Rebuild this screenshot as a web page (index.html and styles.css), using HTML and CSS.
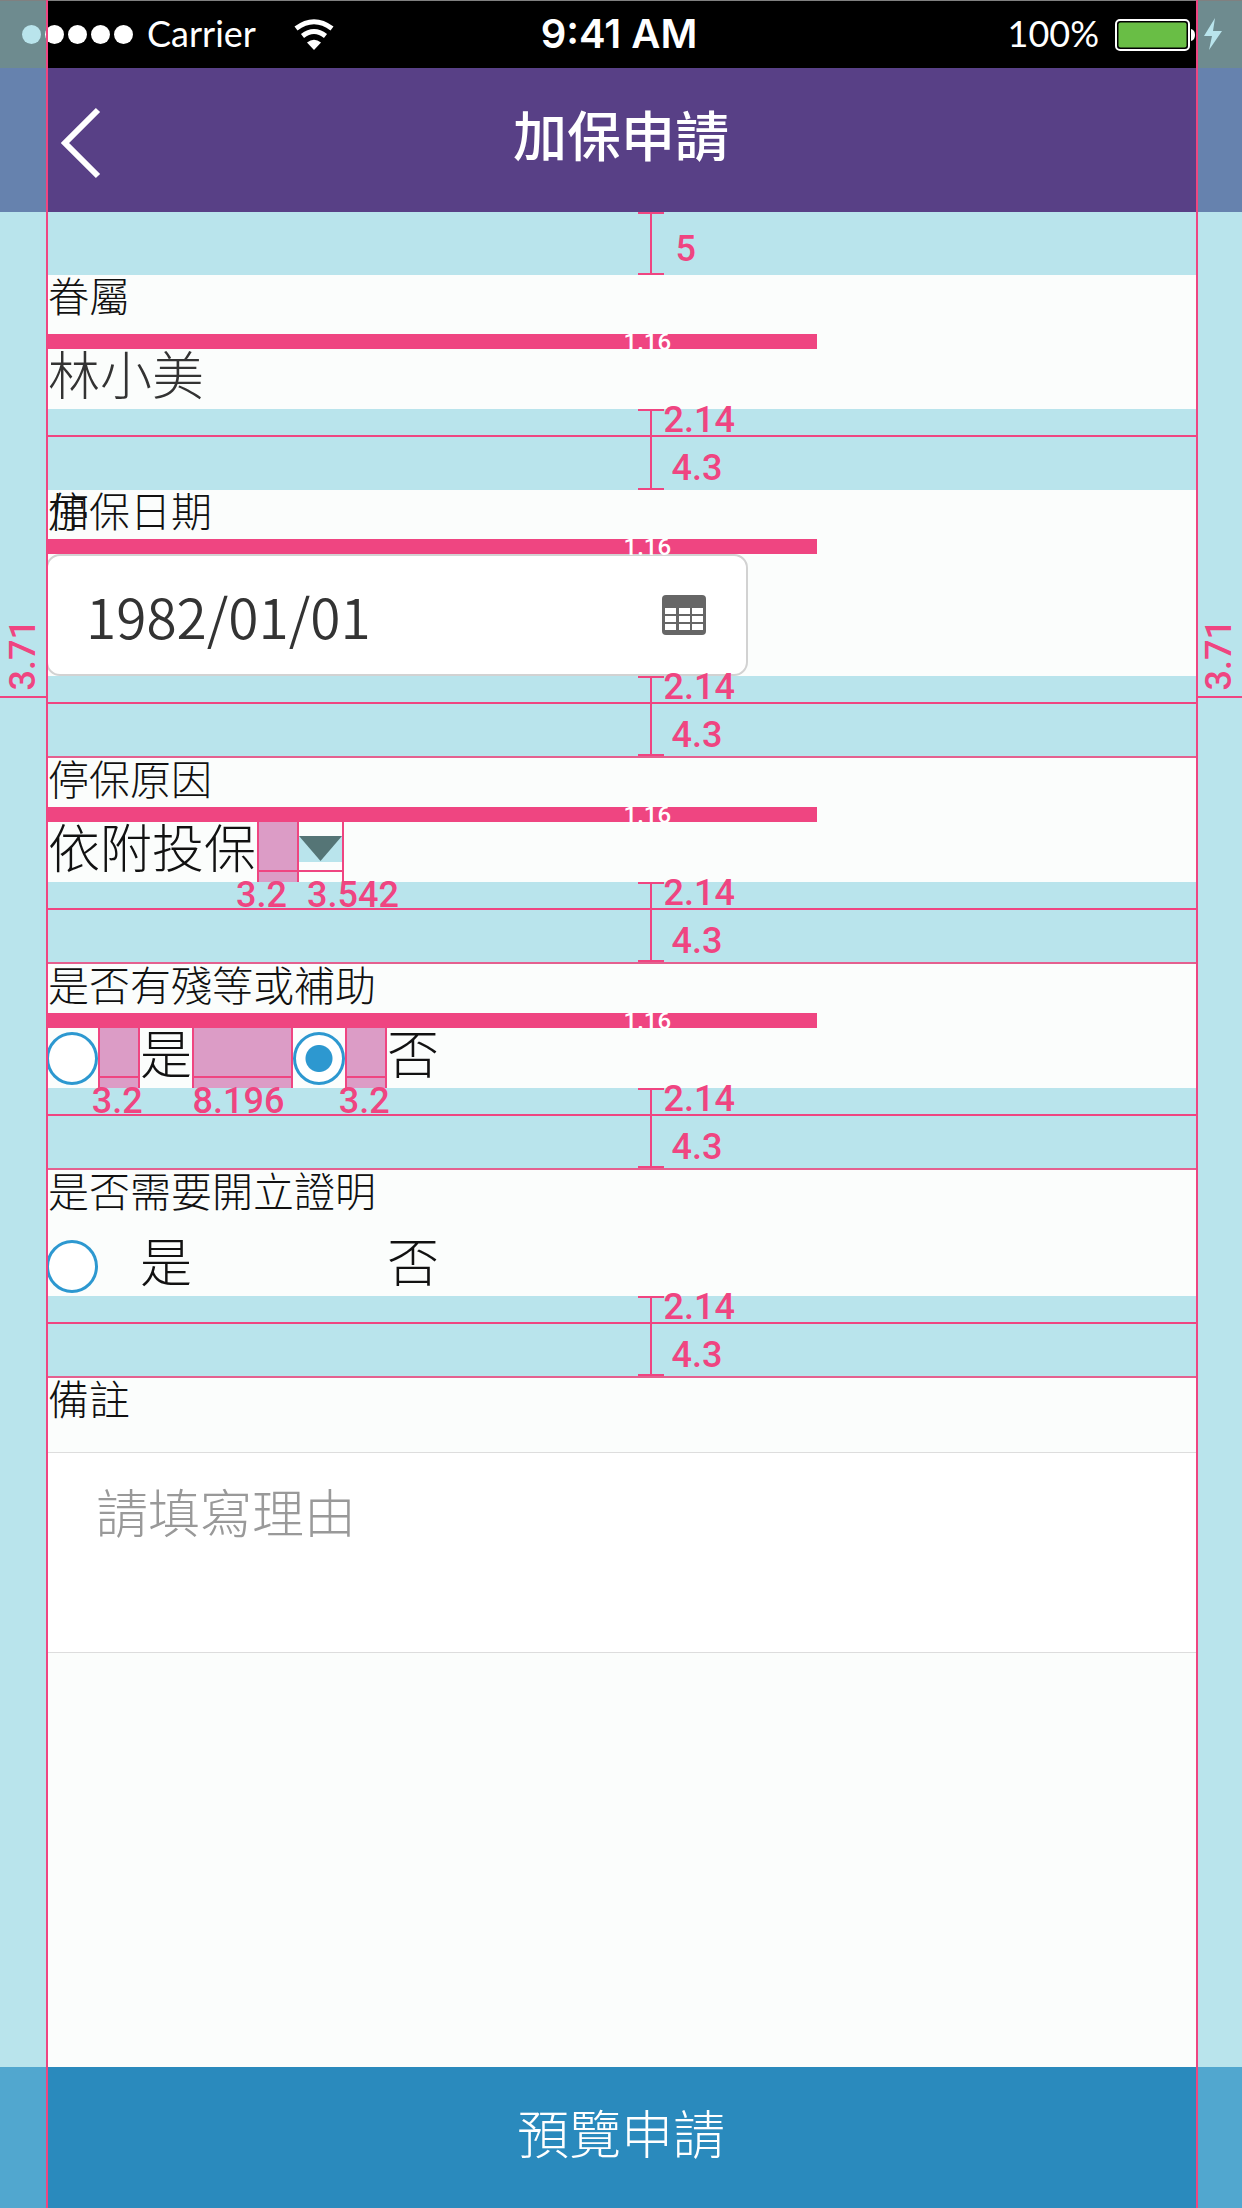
FILE: index.html
```html
<!DOCTYPE html>
<html lang="zh-Hant">
<head>
<meta charset="utf-8">
<meta name="viewport" content="width=device-width, initial-scale=1">
<title>加保申請</title>
<link rel="stylesheet" href="styles.css">
</head>
<body>
<div class="screen">
  <div class="status">
    <div class="status-left">
      <span class="dots"><i class="dot dot-tinted"></i><i class="dot"></i><i class="dot"></i><i class="dot"></i><i class="dot"></i></span>
      <span class="carrier">Carrier</span>
      <svg class="wifi" width="40" height="31" viewBox="0 0 40 31" fill="none" stroke="#fff" stroke-width="5">
        <path d="M2 9.500Q20 -4 38 9.500"/>
        <path d="M8.500 17Q20 8 31.500 17"/>
        <path d="M13 23.500Q20 18 27 23.500L20 31Z" fill="#fff" stroke="none"/>
      </svg>
    </div>
    <span class="clock">9:41 AM</span>
    <div class="status-right">
      <span class="percent">100%</span>
      <svg width="107" height="34" viewBox="0 0 107 34">
        <rect x="1" y="2" width="73" height="30" rx="4" fill="#000" stroke="#fff" stroke-width="2"/>
        <rect x="3.500" y="4.500" width="68" height="25" rx="2" fill="#69be45"/>
        <path d="M76 11q4 1 4 6t-4 6z" fill="#fff"/>
        <path d="M100 0L89 18h8l-3 14L107 13h-9z" fill="#b9e4ec"/>
      </svg>
    </div>
  </div>

  <header class="header">
    <button class="back" type="button" aria-label="返回">
      <svg width="40" height="72" viewBox="0 0 40 72" fill="none" stroke="#fff" stroke-width="6"><path d="M37 3L4 36L37 69"/></svg>
    </button>
    <h1 class="title">加保申請</h1>
  </header>

  <form class="form" id="apply">
    <div class="gap gap-first"><span class="ruler"></span><span class="gap-single">5</span></div>

    <section class="field">
      <div class="label label-tall">眷屬</div>
      <div class="bar">1.16</div>
      <div class="value value-name">林小美</div>
    </section>

    <div class="gap gap-open"><span class="ruler"></span><span class="gap-top">2.14</span><span class="gap-bottom">4.3</span></div>

    <section class="field">
      <label class="label" for="date"><span class="under">停</span>加保日期</label>
      <div class="bar">1.16</div>
      <div class="date">
        <input class="date-input" id="date" type="text" value="1982/01/01">
        <svg width="44" height="40" viewBox="0 0 44 40">
          <rect width="44" height="40" rx="4" fill="#666"/>
          <path fill="#fff" d="M3 13h11v6H3zM17 13h11v6H17zM30 13h11v6H30zM3 21h11v6H3zM17 21h11v6H17zM30 21h11v6H30zM3 29h11v6H3zM17 29h11v6H17zM30 29h11v6H30z"/>
        </svg>
      </div>
    </section>

    <div class="gap"><span class="ruler"></span><span class="gap-top">2.14</span><span class="gap-bottom">4.3</span></div>

    <section class="field">
      <label class="label" for="reason">停保原因</label>
      <div class="bar">1.16</div>
      <div class="value">
        <select class="reason" id="reason"><option>依附投保</option></select>
        <span class="space space-small"><span class="measure measure-end">3.2</span></span>
        <span class="arrow">
          <svg width="43" height="26" viewBox="0 0 43 26"><rect width="43" height="26" fill="#b9e4ec"/><path d="M0 0h43L21.500 25z" fill="#557576"/></svg>
          <span class="measure measure-start">3.542</span>
        </span>
      </div>
    </section>

    <div class="gap"><span class="ruler"></span><span class="gap-top">2.14</span><span class="gap-bottom">4.3</span></div>

    <section class="field">
      <div class="label" id="subsidy">是否有殘等或補助</div>
      <div class="bar">1.16</div>
      <div class="value" role="radiogroup" aria-labelledby="subsidy">
        <input class="radio" type="radio" name="subsidy" id="subsidy-yes">
        <span class="space space-small"><span class="measure">3.2</span></span>
        <label for="subsidy-yes">是</label>
        <span class="space space-large"><span class="measure">8.196</span></span>
        <input class="radio" type="radio" name="subsidy" id="subsidy-no" checked>
        <span class="space space-small"><span class="measure">3.2</span></span>
        <label for="subsidy-no">否</label>
      </div>
    </section>

    <div class="gap"><span class="ruler"></span><span class="gap-top">2.14</span><span class="gap-bottom">4.3</span></div>

    <section class="field">
      <div class="label label-spaced" id="proof">是否需要開立證明</div>
      <div class="value" role="radiogroup" aria-labelledby="proof">
        <input class="radio" type="radio" name="proof" id="proof-yes">
        <span class="blank-small"></span>
        <label for="proof-yes">是</label>
        <span class="blank-large"></span>
        <input class="radio radio-unseen" type="radio" name="proof" id="proof-no">
        <span class="blank-small"></span>
        <label for="proof-no">否</label>
      </div>
    </section>

    <div class="gap"><span class="ruler"></span><span class="gap-top">2.14</span><span class="gap-bottom">4.3</span></div>

    <section class="field">
      <label class="label label-note" for="note">備註</label>
      <textarea class="note" id="note" placeholder="請填寫理由"></textarea>
    </section>

    <div class="side side-left"><span>3.71</span></div>
    <div class="side side-right"><span>3.71</span></div>
  </form>

  <button class="submit" type="submit" form="apply">預覽申請</button>

  <div class="guide guide-left"></div>
  <div class="guide guide-right"></div>
</div>
</body>
</html>
```
FILE: styles.css
```css
:root {
  --pink: #ef4581;
  --tint: #b9e4ec;
  --paper: #fbfdfc;
  --edge: 46px;
}

* { box-sizing: border-box; }

body {
  margin: 0;
  font-family: "Noto Sans CJK TC", sans-serif;
  font-weight: 300;
  color: #111;
}

button, input, select, textarea {
  font: inherit;
  color: inherit;
  border: 0;
  padding: 0;
  margin: 0;
  border-radius: 0;
}

.screen {
  position: relative;
  display: flex;
  flex-direction: column;
  min-height: 100vh;
}

/* Bars whose outer margins are tinted */
.status, .header, .form, .submit {
  background: linear-gradient(90deg, var(--side) var(--edge), var(--fill) var(--edge) calc(100% - 45px), var(--side) calc(100% - 45px));
}

.status {
  --side: #6e8b8f;
  --fill: #000;
  display: grid;
  grid-template-columns: 1fr auto 1fr;
  align-items: center;
  height: 68px;
  padding: 0 20px 0 22px;
  border-top: 1px solid #808080;
  color: #fff;
}

.status-left, .status-right { display: flex; align-items: center; }
.status-right { justify-content: flex-end; gap: 16px; }

.dots { display: flex; gap: 4px; margin-right: 14px; }
.dot { width: 19px; height: 19px; border-radius: 50%; background: #fff; }
.dot-tinted { background: var(--tint); }

.carrier, .percent {
  padding-bottom: 3px;
  font-family: Lato, sans-serif;
  font-weight: 400;
  font-size: 36px;
  line-height: 40px;
}

.wifi { margin-left: 38px; }

.clock {
  padding: 0 6px 2px 0;
  font-family: Inter, sans-serif;
  font-weight: 600;
  font-size: 40px;
  line-height: 40px;
}

.header {
  --side: #6682ae;
  --fill: #584086;
  display: grid;
  grid-template-columns: 1fr auto 1fr;
  align-items: center;
  height: 144px;
  padding: 0 61px;
}

.back {
  justify-self: start;
  display: flex;
  padding-top: 6px;
  background: none;
}

.title {
  margin: 0;
  padding-bottom: 12px;
  font-size: 54px;
  line-height: 60px;
  font-weight: 500;
  color: #fff;
}

.form {
  --side: var(--tint);
  --fill: var(--paper);
  position: relative;
  flex: 1;
  padding: 0 45px 0 var(--edge);
}

/* Spacing bands between fields */
.gap {
  position: relative;
  display: flex;
  flex-direction: column;
  height: 82px;
  background: var(--tint);
  border-bottom: 2px solid #e4608f;
  font-family: Roboto, sans-serif;
  font-size: 36px;
  font-weight: 500;
  color: var(--pink);
}

.gap-open, .gap-first { border-bottom: 0; }
.gap-open { height: 81px; }
.gap-first { height: 63px; }

.gap-single { padding-left: calc(50% + 54px); line-height: 74px; }

.gap-top {
  flex: none;
  height: 28px;
  padding-left: calc(50% + 42px);
  border-bottom: 2px solid var(--pink);
  line-height: 23px;
}

.gap-bottom { padding-left: calc(50% + 50px); line-height: 62px; }

.ruler {
  position: absolute;
  top: 0;
  bottom: 0;
  left: calc(50% + 16px);
  width: 26px;
  border-top: 2px solid var(--pink);
  border-bottom: 2px solid var(--pink);
  background: linear-gradient(var(--pink), var(--pink)) center / 2px 100% no-repeat;
}

.label {
  position: relative;
  display: block;
  height: 49px;
  padding-left: 2px;
  font-size: 41px;
  line-height: 38px;
}

.label-tall { height: 59px; }
.label-spaced { height: 66px; }
.label-note { height: 74px; }
.under { position: absolute; }

.bar {
  width: 67%;
  height: 15px;
  padding-left: calc(50% + 2px);
  background: var(--pink);
  font-family: Roboto, sans-serif;
  font-size: 24px;
  font-weight: 500;
  line-height: 16px;
  color: #fff;
}

.value {
  display: flex;
  height: 60px;
  font-size: 52px;
  line-height: 48px;
}

.value-name { padding-left: 2px; color: #333; }

.date {
  display: flex;
  align-items: center;
  justify-content: space-between;
  width: 61%;
  height: 122px;
  padding: 0 40px 0 38px;
  border: 2px solid #d2d2d2;
  border-radius: 14px;
  background: #fff;
}

.date-input {
  width: 400px;
  height: 80px;
  background: none;
  font-size: 55px;
  font-weight: 350;
  color: #333;
}

.reason {
  appearance: none;
  width: 211px;
  height: 60px;
  margin-top: -6px;
  padding-left: 2px;
  background: none;
  line-height: 60px;
}

/* Measured horizontal spaces inside a row */
.space {
  position: relative;
  height: 60px;
  background: linear-gradient(var(--pink), var(--pink)) 0 48px / 100% 2px no-repeat #dc9cc6;
}

.space::before {
  content: "";
  position: absolute;
  inset: 0 0 -5px;
  border-left: 2px solid var(--pink);
  border-right: 2px solid var(--pink);
}

.space-small, .blank-small { width: 42px; }
.space-large, .blank-large { width: 101px; }

.measure {
  position: absolute;
  z-index: 1;
  top: 59px;
  left: 46%;
  transform: translateX(-50%);
  font-family: Roboto, sans-serif;
  font-size: 36px;
  font-weight: 500;
  line-height: 28px;
  color: var(--pink);
}

.measure-end { left: auto; right: 12px; transform: none; }
.measure-start { left: 8px; transform: none; }

.arrow {
  position: relative;
  width: 45px;
  height: 60px;
  padding-top: 14px;
  border-right: 2px solid var(--pink);
  background: linear-gradient(var(--pink), var(--pink)) 0 48px / 100% 2px no-repeat;
  line-height: 0;
}

.radio {
  appearance: none;
  width: 52px;
  height: 53px;
  margin-top: 4px;
  border: 3px solid #2d98d0;
  border-radius: 50%;
  background: #fff;
}

.radio:checked { background: radial-gradient(circle, #2d98d0 13px, #fff 14px); }
.radio-unseen { opacity: 0; }

.note {
  display: block;
  width: 100%;
  height: 201px;
  padding: 28px 50px;
  border-top: 1px solid #ddd;
  border-bottom: 1px solid #ddd;
  background: #fff;
  font-size: 52px;
  line-height: 60px;
  resize: none;
}

.note::placeholder { color: #999; opacity: 1; }

/* Outer margin sizes */
.side {
  position: absolute;
  top: 402px;
  display: flex;
  align-items: center;
  justify-content: center;
  width: var(--edge);
  height: 84px;
  border-bottom: 2px solid var(--pink);
  font-family: Roboto, sans-serif;
  font-size: 36px;
  font-weight: 500;
  line-height: 46px;
  color: var(--pink);
}

.side span { writing-mode: vertical-rl; transform: rotate(180deg); }
.side-left { left: 0; }
.side-right { right: 0; }

.submit {
  --side: #51a7cf;
  --fill: #2a8abd;
  height: 141px;
  padding-bottom: 12px;
  font-size: 52px;
  line-height: 60px;
  color: #fff;
}

.guide {
  position: absolute;
  top: 0;
  bottom: 0;
  width: 2px;
  background: var(--pink);
}

.guide-left { left: 46px; }
.guide-right { right: 44px; }
```
